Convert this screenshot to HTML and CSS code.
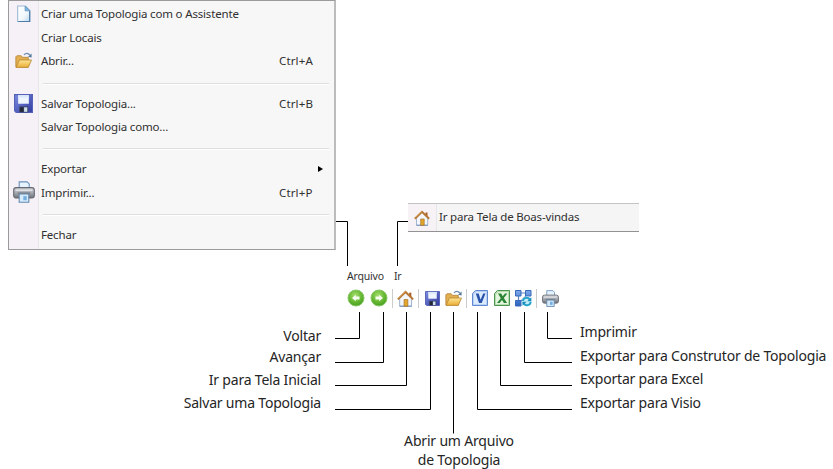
FILE: index.html
```html
<!DOCTYPE html>
<html lang="pt-BR">
<head>
<meta charset="utf-8">
<title>Topologia</title>
<link rel="stylesheet" href="styles.css">
</head>
<body>
<svg class="defs" aria-hidden="true">
  <defs>
    <linearGradient id="paper" x1="0" y1="0" x2="1" y2="1"><stop offset="0" stop-color="#fff"/><stop offset=".6" stop-color="#f1f8fd"/><stop offset="1" stop-color="#b5d6ef"/></linearGradient>
    <linearGradient id="gold" x1="0" y1="0" x2="0" y2="1"><stop offset="0" stop-color="#ffe694"/><stop offset="1" stop-color="#e9ac35"/></linearGradient>
    <linearGradient id="disk" x1="0" y1="0" x2="1" y2="1"><stop offset="0" stop-color="#7d8ee2"/><stop offset="1" stop-color="#3038a0"/></linearGradient>
    <linearGradient id="steel" x1="0" y1="0" x2="0" y2="1"><stop offset="0" stop-color="#d3d6da"/><stop offset=".5" stop-color="#a4a8af"/><stop offset="1" stop-color="#6b7078"/></linearGradient>
    <radialGradient id="green" cx=".45" cy=".35" r=".65"><stop offset="0" stop-color="#a8df70"/><stop offset=".6" stop-color="#68b934"/><stop offset="1" stop-color="#46a022"/></radialGradient>
    <linearGradient id="blue" x1="0" y1="0" x2="0" y2="1"><stop offset="0" stop-color="#7fa9ea"/><stop offset="1" stop-color="#2b62bd"/></linearGradient>
  </defs>
  <symbol id="i-doc" viewBox="0 0 16 16"><path d="M2.500 1h7.300L14 5.200V15.500H2.500z" fill="url(#paper)" stroke="#9db9d3"/><path d="M13.800 5.500v10H3" fill="none" stroke="#4f7ba8" stroke-width="1.100"/><path d="M9.500 1v4.500H14z" fill="#7fb5df" stroke="#5e92bd" stroke-width=".7"/></symbol>
  <symbol id="i-open" viewBox="0 0 16 16"><path d="M.8 14V4.500l1-1h4l1.200 1.500h5.500V14z" fill="#e3af50" stroke="#b5863b" stroke-width=".8"/><path d="M1 14.500 4.200 7.500H15.500L12.500 14.500z" fill="url(#gold)" stroke="#b98a35" stroke-width=".8"/><path d="M8.500 2.800C10 .8 12.500.8 14 3" fill="none" stroke="#6f8db3" stroke-width="1.200"/><path d="M15.600 1.500v3.600l-3.300-.7z" fill="#557699"/></symbol>
  <symbol id="i-save" viewBox="0 0 16 16"><path d="M.5.5h15v15H1.800L.5 14.200z" fill="url(#disk)" stroke="#5560b8"/><path d="M3.500 1h9v7.200h-9z" fill="#eef5ff"/><path d="M3.500 1h9v2h-9z" fill="#dbe7fa"/><path d="M4.500 10.500h7.500v5H4.500z" fill="#3b415a"/><path d="M5.200 11.200h2.500v3.800H5.200z" fill="#232838"/><path d="M8.500 11.200h2.700v3.800H8.500z" fill="#cfe0ee"/></symbol>
  <symbol id="i-print" viewBox="0 0 16 16"><path d="M4.500.6h5.800l1.500 1.500V7H4.500z" fill="#e5f3ff" stroke="#6c92ba" stroke-width=".8"/><rect x=".5" y="4.800" width="15" height="7.600" rx="1.800" fill="url(#steel)" stroke="#656971" stroke-width=".8"/><path d="M2 6.700h12" stroke="#eceef1" stroke-width=".8"/><path d="M3.500 8.800h9" stroke="#6c727b" stroke-width=".8"/><path d="M4.500 9.500h7v6h-7z" fill="#d6ebfc" stroke="#6689ae" stroke-width=".8"/><path d="M7.500 11h2.500v3H7.500z" fill="#74afe0"/></symbol>
  <symbol id="i-home" viewBox="0 0 16 16"><path d="M11.500 2.500h2v4h-2z" fill="#a75c24"/><path d="M2.500 7.700 8 2.300l5.700 5.400v7.500H2.500z" fill="#f3f7fd" stroke="#91a7c5" stroke-width=".8"/><path d="M2.500 15.300h11.300" stroke="#7993bc"/><path d="M.8 8.800 8 1.800l7.200 7" fill="none" stroke="#b67531" stroke-width="1.900"/><path d="M1.500 7.500 8 1.300" fill="none" stroke="#e3b46a" stroke-width=".6"/><path d="M6.700 9h3.500v6.300H6.700z" fill="#e3a72e" stroke="#a77124" stroke-width=".7"/></symbol>
  <symbol id="i-back" viewBox="0 0 18 18"><circle cx="9" cy="9" r="8" fill="url(#green)" stroke="#8ac765"/><path d="M5 9 8.800 5.700v1.800h3.700v3H8.800v1.800z" fill="#f8fff2"/></symbol>
  <symbol id="i-next" viewBox="0 0 18 18"><circle cx="9" cy="9" r="8" fill="url(#green)" stroke="#8ac765"/><path d="M13 9 9.200 5.700v1.800H5.500v3h3.700v1.800z" fill="#f8fff2"/></symbol>
  <symbol id="i-visio" viewBox="0 0 16 16"><path d="M3.500.5h12v15H.5v-12z" fill="#b9d1f6" stroke="#5f88ce"/><path d="M4.500 2h9.500v12H2V4.500z" fill="#dceafe"/><path d="M3.800 3.500h2.900L8.600 9.800l2.600-6.300h2.300L9.700 13H7z" fill="#2852ab"/></symbol>
  <symbol id="i-excel" viewBox="0 0 16 16"><path d="M3.500.5h12v15H.5v-12z" fill="#b7dcaf" stroke="#4a9551"/><path d="M4.500 2h9.500v12H2V4.500z" fill="#e4f5de"/><path d="M4 3.500h3.200l1.500 2.700 2.300-2.700h2.400L9.800 8l3.300 5H9.900L8 10.100 5.600 13H3L6.800 8.300z" fill="#2a8435"/></symbol>
  <symbol id="i-builder" viewBox="0 0 17 17"><path d="M3 3h11M3.500 4v9M13 4 4 13" stroke="#5f84bd" stroke-width="1.200"/><path d="M.5.500h5.500v5.500h-5.500zM10.500 .5h5.500v5.500h-5.500zM.5 10.500h5.500v5.500H.5z" fill="url(#blue)" stroke="#386abc"/><circle cx="11.800" cy="11.500" r="5" fill="#c4edf8"/><path d="M8 11c.2-3.800 5-4.200 6.700-1.500M15.600 12c-.2 3.800-5 4.200-6.700 1.500" fill="none" stroke="#26a1cb" stroke-width="1.900"/><path d="M16.300 7.300v4h-4zM7.500 15.800v-4h4z" fill="#168bb9"/></symbol>
</svg>

<main class="figure">
  <section class="menus">
    <nav class="menu">
      <div class="row"><span class="ico"><svg class="s17"><use href="#i-doc"/></svg></span><span class="name">Criar uma Topologia com o Assistente</span></div>
      <div class="row"><span class="ico"></span><span class="name">Criar Locais</span></div>
      <div class="row"><span class="ico"><svg class="s17"><use href="#i-open"/></svg></span><span class="name">Abrir...</span><span class="key">Ctrl+A</span></div>
      <div class="sep"></div>
      <div class="row"><span class="ico"><svg class="s19"><use href="#i-save"/></svg></span><span class="name">Salvar Topologia...</span><span class="key">Ctrl+B</span></div>
      <div class="row"><span class="ico"></span><span class="name">Salvar Topologia como...</span></div>
      <div class="sep"></div>
      <div class="row"><span class="ico"></span><span class="name">Exportar</span><span class="arrow"></span></div>
      <div class="row"><span class="ico"><svg class="s22"><use href="#i-print"/></svg></span><span class="name">Imprimir...</span><span class="key">Ctrl+P</span></div>
      <div class="sep"></div>
      <div class="row"><span class="ico"></span><span class="name">Fechar</span></div>
    </nav>
    <nav class="submenu"><span class="home"><svg class="s16"><use href="#i-home"/></svg></span><span class="welcome">Ir para Tela de Boas-vindas</span></nav>
  </section>

  <header class="menubar"><span class="file">Arquivo</span><span>Ir</span></header>
  <div class="toolbar">
    <svg class="s18"><use href="#i-back"/></svg>
    <svg class="s18 next"><use href="#i-next"/></svg>
    <i class="bar"></i>
    <svg class="s17"><use href="#i-home"/></svg>
    <i class="bar b2"></i>
    <svg class="s15"><use href="#i-save"/></svg>
    <svg class="s17 open"><use href="#i-open"/></svg>
    <i class="bar b3"></i>
    <svg class="s16"><use href="#i-visio"/></svg>
    <svg class="s16 excel"><use href="#i-excel"/></svg>
    <svg class="s17 builder"><use href="#i-builder"/></svg>
    <i class="bar b4"></i>
    <svg class="s17"><use href="#i-print"/></svg>
  </div>

  <section class="labels">
    <div class="left"><span>Voltar</span><span class="forward">Avançar</span><span>Ir para Tela Inicial</span><span>Salvar uma Topologia</span></div>
    <div class="right"><span>Imprimir</span><span>Exportar para Construtor de Topologia</span><span>Exportar para Excel</span><span>Exportar para Visio</span></div>
  </section>
  <p class="bottom">Abrir um Arquivo<br>de Topologia</p>

  <svg class="leaders" viewBox="0 0 833 469"><path d="M336 221.500h11.500V266M408 221.500h-10.500V266M335 338.500h24.500V312M335 362.500h48.500V312M335 385.500h71.500V312M335 409.500h95.500V312M453.500 312v121.500M572 409.500h-94.500V312M572 385.500h-71.500V312M572 362.500h-47.500V312M572 338.500h-24.500V312"/></svg>
</main>
</body>
</html>
```
FILE: styles.css
```css
* { box-sizing: border-box; }
body { margin: 0; background: #fff; overflow: hidden; font-family: "Noto Sans", sans-serif; }
.defs { position: absolute; width: 0; height: 0; }
.figure { position: relative; width: 833px; height: 469px; }
.figure svg { display: block; flex: none; }

.s15 { width: 15px; height: 15px; }
.s16 { width: 16px; height: 16px; }
.s17 { width: 17px; height: 17px; }
.s18 { width: 18px; height: 18px; }
.s19 { width: 19px; height: 19px; }
.s22 { width: 22px; height: 22px; }

.menus { display: flex; height: 250px; padding-left: 8px; }
.menu {
  width: 328px; height: 250px; padding-top: 1px;
  border: 1px solid #9b9b9b; border-right: 2px solid #bcbcbc;
  background: linear-gradient(90deg, #f5f1f6 29px, #e9e6ea 29px, #e9e6ea 30px, #f7f7f7 30px);
  font-size: 11.5px; letter-spacing: -.17px; color: #303030;
}
.row { display: flex; align-items: center; height: 23.6px; white-space: nowrap; }
.ico { display: flex; justify-content: center; width: 29px; }
.name { flex: 1; padding-left: 3px; }
.key { width: 55px; letter-spacing: .15px; }
.arrow { margin-right: 11px; border-left: 5px solid #000; border-top: 3.5px solid transparent; border-bottom: 3.5px solid transparent; }
.sep { height: 18.5px; margin: 0 5px 0 34px; background: linear-gradient(#dedede 50%, #fff 50%) 0 10px / 100% 2px no-repeat; }

.submenu {
  display: flex; align-items: center; width: 231px; height: 29px; margin: 203px 0 0 72px;
  border-top: 1px solid #c4c4c4; border-bottom: 1px solid #929292;
  background: linear-gradient(90deg, #f7f2f6 28px, #e9e6ea 28px, #e9e6ea 29px, #f5f5f5 29px);
  font-size: 11.5px; letter-spacing: -.18px; color: #303030; white-space: nowrap;
}
.home { width: 31px; padding-left: 6px; }
.welcome { padding-bottom: 2px; }

.menubar { display: flex; height: 16px; margin: 18px 0 0 347px; font-size: 10.5px; line-height: 17px; letter-spacing: -.2px; color: #333; }
.file { width: 47px; }
.toolbar { display: flex; align-items: center; height: 28px; padding-left: 347px; }
.next { margin-left: 5px; }
.bar { width: 1px; height: 19px; margin: 0 4px 0 4px; background: #ccc; }
.b2 { margin: 0 6px 0 4px; }
.open { margin-left: 5px; }
.b3 { margin: 0 5px 0 4px; }
.excel { margin-left: 6px; }
.builder { margin-left: 5px; }
.b4 { margin: 0 5px 0 4px; }

.labels { display: flex; height: 122px; font-size: 14px; line-height: 20px; letter-spacing: -.2px; color: #252525; white-space: nowrap; }
.left, .right { display: flex; flex-direction: column; }
.left { width: 321px; padding-top: 14px; gap: 3px; align-items: flex-end; }
.forward { margin-top: -2px; }
.right { margin-left: 259px; padding-top: 10px; gap: 3.5px; align-items: flex-start; }
.bottom { width: 200px; margin: -3px 0 0 359px; font-size: 14px; line-height: 19px; letter-spacing: -.18px; text-align: center; color: #252525; }

.leaders { position: absolute; left: 0; top: 0; width: 833px; height: 469px; fill: none; stroke: #000; stroke-width: 1; pointer-events: none; }
```
